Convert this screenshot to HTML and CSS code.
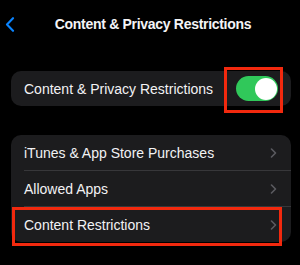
FILE: index.html
```html
<!DOCTYPE html>
<html>
<head>
<meta charset="utf-8">
<link rel="stylesheet" href="styles.css">
</head>
<body>
<div class="header">
  <div class="back">
    <svg width="10" height="15" viewBox="0 0 10 15"><path d="M8 1.2 L2 7.5 L8 13.8" fill="none" stroke="#0a84ff" stroke-width="2.1" stroke-linecap="round" stroke-linejoin="round"/></svg>
  </div>
  <div class="title">Content &amp; Privacy Restrictions</div>
  <div></div>
</div>

<div class="card card-single">
  <div class="label">Content &amp; Privacy Restrictions</div>
  <div class="toggle-wrap">
    <div class="toggle"><div class="knob"></div></div>
    <span class="highlight highlight-toggle"></span>
  </div>
</div>

<div class="card card-list">
  <div class="row">
    <div class="row-inner">
      <span class="label">iTunes &amp; App Store Purchases</span>
      <svg class="chev" width="7" height="10" viewBox="0 0 7 10"><path d="M1.5 1 L5.5 5 L1.5 9" fill="none" stroke="#5b5b60" stroke-width="1.6" stroke-linecap="round" stroke-linejoin="round"/></svg>
    </div>
  </div>
  <div class="row">
    <div class="row-inner">
      <span class="label">Allowed Apps</span>
      <svg class="chev" width="7" height="10" viewBox="0 0 7 10"><path d="M1.5 1 L5.5 5 L1.5 9" fill="none" stroke="#5b5b60" stroke-width="1.6" stroke-linecap="round" stroke-linejoin="round"/></svg>
    </div>
  </div>
  <div class="row row-last">
    <div class="row-inner">
      <span class="label">Content Restrictions</span>
      <svg class="chev" width="7" height="10" viewBox="0 0 7 10"><path d="M1.5 1 L5.5 5 L1.5 9" fill="none" stroke="#5b5b60" stroke-width="1.6" stroke-linecap="round" stroke-linejoin="round"/></svg>
    </div>
    <span class="highlight highlight-row"></span>
  </div>
</div>
</body>
</html>
```

FILE: styles.css
```css
html, body {
  margin: 0;
  padding: 0;
  background: #000;
}
body {
  width: 300px;
  height: 265px;
  overflow: hidden;
  font-family: "Liberation Sans", Arial, sans-serif;
  color: #f2f2f4;
}
.header {
  height: 48px;
  display: grid;
  grid-template-columns: 1fr auto 1fr;
  align-items: center;
  padding-left: 5px;
  box-sizing: border-box;
}
.back {
  justify-self: start;
  display: flex;
  padding-top: 1px;
}
.title {
  font-weight: bold;
  font-size: 14px;
  letter-spacing: -0.3px;
  line-height: 16px;
  color: #f4f4f6;
  padding-left: 1px;
}
.card {
  background: #1c1c1e;
  border-radius: 10px;
  margin-left: 11px;
  width: 280px;
}
.label {
  font-size: 14px;
  line-height: 16px;
}
.card-single {
  margin-top: 23px;
  height: 35px;
  display: flex;
  align-items: center;
  justify-content: space-between;
  padding: 0 13px;
  box-sizing: border-box;
}
.toggle-wrap {
  position: relative;
  display: flex;
}
.toggle {
  width: 42px;
  height: 25px;
  border-radius: 12.5px;
  background: #30c85a;
  display: flex;
  align-items: center;
  justify-content: flex-end;
  padding: 0 1.5px;
  box-sizing: border-box;
}
.knob {
  width: 22px;
  height: 22px;
  border-radius: 50%;
  background: #fff;
}
.highlight {
  position: absolute;
  border: 3px solid #f2290e;
  box-sizing: border-box;
}
.highlight-toggle {
  left: -12px;
  top: -9px;
  width: 59px;
  height: 46px;
}
.card-list {
  margin-top: 29px;
}
.row {
  position: relative;
  padding-left: 13px;
  display: flex;
}
.row-inner {
  flex: 1;
  height: 36px;
  border-bottom: 1px solid #37373a;
  box-sizing: border-box;
  display: flex;
  align-items: center;
  justify-content: space-between;
  padding-right: 14px;
}
.row-last .row-inner {
  border-bottom: none;
  height: 35px;
}
.row:first-child .row-inner {
  height: 36px;
}
.chev {
  display: block;
}
.highlight-row {
  left: 1px;
  top: 0;
  width: 270px;
  height: 39px;
}
```
